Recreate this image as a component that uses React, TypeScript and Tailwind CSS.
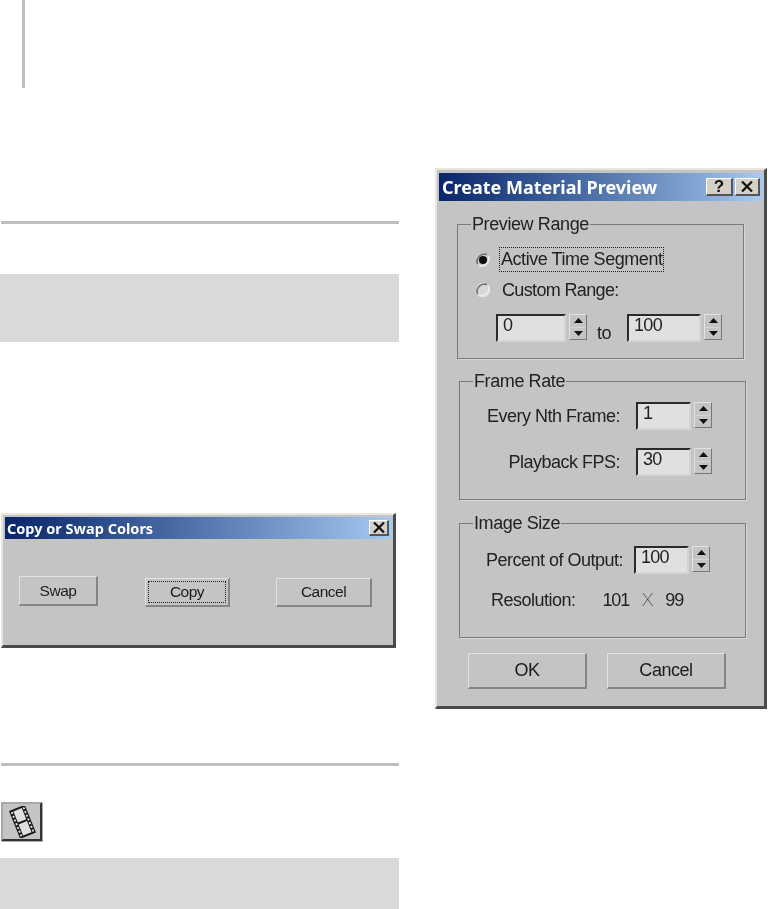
const ui = { fontFamily: '"Liberation Sans", Arial, sans-serif' };
const title = { fontFamily: '"Noto Sans", "DejaVu Sans", sans-serif' };

function Bevel({ className = "", children }: { className?: string; children?: React.ReactNode }) {
  return (
    <div className={"flex items-center justify-center bg-[#c4c4c4] border-t border-l border-[#e2e2e2] border-r-2 border-b-2 border-r-[#858585] border-b-[#858585] text-[#1c1c1c] " + className}>
      {children}
    </div>
  );
}

function Spin({ className = "" }: { className?: string }) {
  return (
    <div className={"flex flex-col w-[18px] h-[26px] border-t border-l border-[#e2e2e2] border-r border-b border-r-[#777] border-b-[#777] bg-[#c4c4c4] " + className}>
      <div className="flex-1 flex items-center justify-center">
        <svg width="9" height="5" viewBox="0 0 9 5"><path d="M4.5 0 L9 5 L0 5 Z" fill="#111" /></svg>
      </div>
      <div className="h-px bg-[#d4d4d4]" />
      <div className="flex-1 flex items-center justify-center">
        <svg width="9" height="5" viewBox="0 0 9 5"><path d="M0 0 L9 0 L4.5 5 Z" fill="#111" /></svg>
      </div>
    </div>
  );
}

function Field({ value, w }: { value: string; w: string }) {
  return (
    <div className={"h-[28px] bg-[#e0e0e0] border-t-2 border-l-2 border-[#2a2a2a] border-r-2 border-b-2 border-r-[#d4d4d4] border-b-[#d4d4d4] pl-[5px] text-[18px] tracking-[-0.7px] leading-[19px] text-[#222] " + w}>
      {value}
    </div>
  );
}

function Group({ label, className, children }: { label: string; className: string; children?: React.ReactNode }) {
  return (
    <div className={"relative border border-[#7a7a7a] shadow-[1px_1px_0_#d8d8d8] " + className}>
      <span className="absolute left-[13px] top-[-11px] bg-[#c4c4c4] px-[1px] text-[18px] tracking-[-0.4px] leading-[20px] text-[#222]">{label}</span>
      {children}
    </div>
  );
}

function Radio({ on }: { on?: boolean }) {
  return (
    <svg width="18" height="18" viewBox="0 0 18 18" className="shrink-0">
      <circle cx="9" cy="9" r="7.5" fill={on ? "#c9c9c9" : "#d8d8d8"} />
      <path d="M3.5 13 A7.5 7.5 0 0 1 13 3.5" stroke="#6e6e6e" strokeWidth="1.6" fill="none" />
      <path d="M14.5 5 A7.5 7.5 0 0 1 5 14.5" stroke="#ededed" strokeWidth="1.6" fill="none" />
      {on && <circle cx="9" cy="9" r="4" fill="#0c0c0c" />}
    </svg>
  );
}

function TitleClose({ className = "", children }: { className?: string; children?: React.ReactNode }) {
  return (
    <div className={"flex items-center justify-center bg-[#d4d0c8] border-t border-l border-white border-r-2 border-b-2 border-r-[#555] border-b-[#555] text-[#111] " + className}>
      {children}
    </div>
  );
}

const XIcon = () => (
  <svg width="12" height="11" viewBox="0 0 12 11"><path d="M1 0.5 L11 10.5 M11 0.5 L1 10.5" stroke="#111" strokeWidth="2.2" /></svg>
);

function CopyDialog() {
  const label = "text-[15.5px] tracking-[-0.5px]";
  return (
    <div className="ml-[1px] mt-[171px] w-[395px] h-[135px] bg-[#c4c4c4] border-t-2 border-l-2 border-[#e8e6df] border-r-[3px] border-b-[3px] border-r-[#4a4a4a] border-b-[#4a4a4a] pt-[2px] pl-[2px] pr-[1px] blur-[0.5px]" style={ui}>
      <div className="h-[22px] flex items-center justify-between bg-gradient-to-r from-[#0a246a] to-[#a6caf0] pl-[2px] pr-[3px]">
        <span className="text-[14.5px] font-bold text-white leading-none" style={title}>Copy or Swap Colors</span>
        <TitleClose className="w-[20px] h-[16px]"><XIcon /></TitleClose>
      </div>
      <div className="flex items-start pl-[14px] pt-[37px]">
        <Bevel className={"w-[79px] h-[30px] " + label}>Swap</Bevel>
        <Bevel className={"ml-[47px] mt-[2px] w-[85px] h-[29px] p-[2px] " + label}>
          <div className="w-full h-full border border-dotted border-[#222] flex items-center justify-center">Copy</div>
        </Bevel>
        <Bevel className={"ml-[46px] mt-[2px] w-[96px] h-[29px] " + label}>Cancel</Bevel>
      </div>
    </div>
  );
}

function FilmIcon() {
  return (
    <div className="ml-[1px] mt-[36px] w-[41px] h-[39px] bg-[#c4c4c4] border-t-2 border-l-2 border-[#a8a8a8] border-r-2 border-b-2 border-r-[#333] border-b-[#333] shadow-[1px_1px_0_#aaa] flex items-center justify-center blur-[0.3px]">
      <svg width="32" height="32" viewBox="0 0 32 32">
        <g transform="rotate(-22 16 16)">
          <rect x="8" y="1" width="17" height="30" fill="#1a1a1a" />
          <rect x="12" y="3" width="9" height="12" fill="#e0e0e0" />
          <rect x="12" y="17" width="9" height="12" fill="#e0e0e0" />
          {[3, 7, 11, 15, 19, 23, 27].map((y) => (
            <g key={y}>
              <rect x="9.2" y={y} width="1.8" height="2" fill="#e8e8e8" />
              <rect x="22" y={y} width="1.8" height="2" fill="#e8e8e8" />
            </g>
          ))}
        </g>
      </svg>
    </div>
  );
}

function MaterialDialog() {
  const label = "text-[18px] tracking-[-0.5px] text-[#222] whitespace-nowrap";
  const bigBtn = "w-[119px] h-[36px] text-[18px] tracking-[-0.45px]";
  return (
    <div className="ml-[36px] mt-[168px] w-[332px] h-[541px] bg-[#c4c4c4] border-t-2 border-l-2 border-[#e8e6df] border-r-[3px] border-b-[3px] border-r-[#4a4a4a] border-b-[#4a4a4a] pt-[3px] pl-[2px] pr-[1px] blur-[0.5px]" style={ui}>
      <div className="h-[28px] flex items-center justify-between bg-gradient-to-r from-[#0a246a] to-[#a6caf0] pl-[3px] pr-[3px]">
        <span className="text-[18px] font-bold text-white leading-none" style={title}>Create Material Preview</span>
        <div className="flex gap-[2px]">
          <TitleClose className="w-[27px] h-[18px] text-[17px] font-bold">?</TitleClose>
          <TitleClose className="w-[25px] h-[18px]"><XIcon /></TitleClose>
        </div>
      </div>

      <Group label="Preview Range" className="ml-[18px] mt-[23px] w-[287px] h-[135px]">
        <div className="flex items-center ml-[16px] mt-[22px] h-[25px]">
          <Radio on />
          <div className={"ml-[7px] w-[165px] h-[25px] border border-dotted border-[#222] pl-[1px] flex items-center text-[18px] tracking-[-0.45px] text-[#222] whitespace-nowrap"}>Active Time Segment</div>
        </div>
        <div className="flex items-center ml-[16px] mt-[6px] h-[24px]">
          <Radio />
          <div className={"ml-[10px] text-[18px] tracking-[-0.65px] text-[#222]"}>Custom Range:</div>
        </div>
        <div className="flex items-start ml-[38px] mt-[12px]">
          <Field value="0" w="w-[70px]" />
          <Spin className="ml-[3px]" />
          <span className={"ml-[10px] mt-[10px] leading-[18px] " + label}>to</span>
          <Field value="100" w="w-[74px] ml-[16px]" />
          <Spin className="ml-[3px]" />
        </div>
      </Group>

      <Group label="Frame Rate" className="ml-[20px] mt-[22px] w-[287px] h-[119px]">
        <div className="flex items-start mt-[20px]">
          <div className={"w-[160px] h-[28px] flex items-center justify-end " + label}>Every Nth Frame:</div>
          <Field value="1" w="w-[55px] ml-[16px]" />
          <Spin className="ml-[3px]" />
        </div>
        <div className="flex items-start mt-[18px]">
          <div className={"w-[160px] h-[28px] flex items-center justify-end " + label}>Playback FPS:</div>
          <Field value="30" w="w-[55px] ml-[16px]" />
          <Spin className="ml-[3px]" />
        </div>
      </Group>

      <Group label="Image Size" className="ml-[20px] mt-[23px] w-[287px] h-[115px]">
        <div className="flex items-start mt-[22px]">
          <div className={"w-[163px] h-[28px] flex items-center justify-end " + label}>Percent of Output:</div>
          <Field value="100" w="w-[55px] ml-[11px]" />
          <Spin className="ml-[3px]" />
        </div>
        <div className={"flex items-center ml-[31px] mt-[14px] h-[24px] " + label}>
          <span>Resolution:</span>
          <span className="ml-[27px] tracking-[-1.2px]">101</span>
          <span className="ml-[13px] font-['Roboto'] font-thin text-[19px] tracking-normal">X</span>
          <span className="ml-[12px] tracking-[-1px]">99</span>
        </div>
      </Group>

      <div className="flex ml-[29px] mt-[15px] gap-[20px]">
        <Bevel className={bigBtn}>OK</Bevel>
        <Bevel className={bigBtn}>Cancel</Bevel>
      </div>
    </div>
  );
}

export default function App() {
  return (
    <div className="flex w-[768px] h-[909px] bg-white overflow-hidden">
      <div className="w-[399px] shrink-0">
        <div className="ml-[22px] w-[3px] h-[88px] bg-[#bfbfbf]" />
        <div className="ml-[1px] mt-[133px] h-[3px] bg-[#bfbfbf]" />
        <div className="mt-[50px] h-[68px] bg-[#d9d9d9]" />
        <CopyDialog />
        <div className="ml-[1px] mt-[115px] h-[3px] bg-[#bfbfbf]" />
        <FilmIcon />
        <div className="mt-[17px] h-[51px] bg-[#d9d9d9]" />
      </div>
      <div className="flex-1">
        <MaterialDialog />
      </div>
    </div>
  );
}
